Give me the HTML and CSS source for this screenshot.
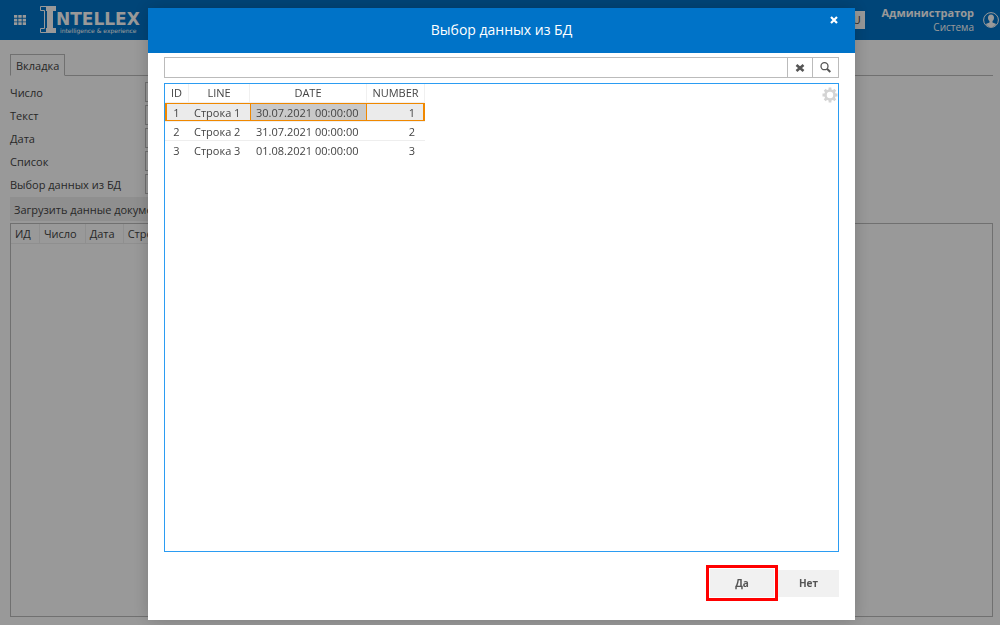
FILE: index.html
```html
<!DOCTYPE html>
<html lang="ru">
<head>
<meta charset="utf-8">
<meta name="viewport" content="width=device-width, initial-scale=1">
<title>Выбор данных из БД</title>
<link rel="stylesheet" href="styles.css">
</head>
<body>
<div class="app">
  <header class="topbar">
    <button class="icon-button" type="button" aria-label="Меню">
      <svg width="12" height="10" viewBox="0 0 12 10" fill="#fff"><path d="M0 0h3.3v2.7H0zM4.3 0h3.4v2.7H4.3zM8.7 0H12v2.7H8.7zM0 3.7h3.3v2.7H0zM4.3 3.7h3.4v2.7H4.3zM8.7 3.7H12v2.7H8.7zM0 7.3h3.3V10H0zM4.3 7.3h3.4V10H4.3zM8.7 7.3H12V10H8.7z"/></svg>
    </button>
    <div class="logo">
      <svg width="16" height="27" viewBox="0 0 16 27" aria-hidden="true"><path d="M7 .5H.5V4.500H4.500V22.500H.5v4H7" fill="none" stroke="#fff"/><path d="M6 0h10v5h-3v17h3v5H6v-5h1V5H6z" fill="#fff"/></svg>
      <div class="logo-text">
        <span class="logo-name">NTELLEX</span>
        <span class="logo-slogan">intelligence &amp; experience</span>
      </div>
    </div>
    <button class="lang" type="button">RU</button>
    <div class="user">
      <span class="user-name">Администратор</span>
      <span class="user-role">Система</span>
    </div>
    <svg class="avatar" width="16" height="16" viewBox="0 0 16 16" aria-hidden="true"><circle cx="8" cy="8" r="7.400" fill="none" stroke="#fff"/><path d="M8 2.500c-2 0-3 1.300-3 3.200 0 1.500.6 2.700 1.500 3.400v1.300l-3.700 1.500C4 13.800 5.900 15 8 15s4-1.200 5.200-3.100L9.500 10.400V9.100C10.400 8.400 11 7.200 11 5.700c0-1.900-1-3.200-3-3.200z" fill="#fff"/></svg>
  </header>
  <main class="page">
    <div class="tabs"><button class="tab" type="button">Вкладка</button></div>
    <form class="fields">
      <label for="f-number">Число</label><input id="f-number" type="text">
      <label for="f-text">Текст</label><input id="f-text" type="text">
      <label for="f-date">Дата</label><input id="f-date" type="text">
      <label for="f-list">Список</label><input id="f-list" type="text">
      <label for="f-db">Выбор данных из БД</label><input id="f-db" type="text">
    </form>
    <button class="load" type="button">Загрузить данные документа</button>
    <div class="sheet">
      <table class="columns">
        <thead><tr><th>ИД</th><th>Число</th><th>Дата</th><th>Строка</th></tr></thead>
      </table>
    </div>
  </main>
</div>
<div class="overlay">
  <section class="dialog" role="dialog" aria-modal="true" aria-labelledby="dialog-title">
    <header class="dialog-head">
      <h1 id="dialog-title">Выбор данных из БД</h1>
      <button class="close" type="button" aria-label="Закрыть">
        <svg width="8" height="8" viewBox="0 0 8 8"><path d="M1 1l6 6M7 1L1 7" stroke="#fff" stroke-width="2.200"/></svg>
      </button>
    </header>
    <div class="dialog-body">
      <div class="search">
        <input type="text" aria-label="Поиск">
        <button type="button" aria-label="Очистить"><svg width="10" height="8" viewBox="0 0 10 8"><path d="M1.500 1l7 6M8.500 1l-7 6" stroke="#555" stroke-width="2.600"/></svg></button>
        <button type="button" aria-label="Найти"><svg width="11" height="11" viewBox="0 0 11 11" fill="none" stroke="#555"><circle cx="4.500" cy="4.200" r="3.500" stroke-width="1.300"/><path d="M7 6.800l3.300 3.200" stroke-width="2"/></svg></button>
      </div>
      <div class="results">
        <table class="grid">
          <colgroup><col class="c-id"><col class="c-line"><col class="c-date"><col class="c-number"></colgroup>
          <thead><tr><th>ID</th><th>LINE</th><th>DATE</th><th>NUMBER</th></tr></thead>
          <tbody>
            <tr class="selected"><td>1</td><td>Строка 1</td><td class="current">30.07.2021 00:00:00</td><td>1</td></tr>
            <tr><td>2</td><td>Строка 2</td><td>31.07.2021 00:00:00</td><td>2</td></tr>
            <tr><td>3</td><td>Строка 3</td><td>01.08.2021 00:00:00</td><td>3</td></tr>
          </tbody>
        </table>
        <button class="settings" type="button" aria-label="Настройки">
          <svg width="16" height="16" viewBox="0 0 16 16" fill="none" stroke="#d4d4d4"><circle cx="8" cy="8" r="4.500" stroke-width="2.600"/><path d="M8 .5v3M8 12.500v3M.5 8h3M12.500 8h3M2.700 2.700l2 2M11.300 11.300l2 2M13.300 2.700l-2 2M4.700 11.300l-2 2" stroke-width="2.800"/></svg>
        </button>
      </div>
      <footer class="actions">
        <div class="highlight"><button type="button">Да</button></div>
        <button type="button">Нет</button>
      </footer>
    </div>
  </section>
</div>
</body>
</html>
```

FILE: styles.css
```css
* { box-sizing: border-box; }
body { margin: 0; background: #fff; color: #444; font: 11px/16px "Open Sans", sans-serif; overflow: hidden; }
button, input { font: inherit; color: inherit; margin: 0; padding: 0; border: 0; border-radius: 0; background: none; }
svg { display: block; }
table { border-collapse: collapse; }
th { font-weight: 400; }

.app { display: flex; flex-direction: column; height: 100vh; }
.topbar { display: flex; align-items: center; height: 40px; padding: 0 1px 0 14px; background: #0073c8; color: #fff; flex: none; }
.logo { display: flex; margin-left: 14px; }
.logo-text { display: flex; flex-direction: column; padding-top: 5px; }
.logo-name { font: bold 17px/17px "DejaVu Sans", sans-serif; }
.logo-slogan { font: 6px/6px "DejaVu Sans", sans-serif; padding-left: 4px; }
.lang { width: 24px; height: 18px; margin-left: auto; background: #fff; color: #444; }
.user { display: flex; flex-direction: column; margin-left: 16px; text-align: right; line-height: 14px; }
.user-name { font-weight: 700; }
.user-role { font-size: 10px; }
.avatar { margin-left: 9px; }

.page { display: flex; flex-direction: column; flex: 1; padding: 14px 7px 8px 10px; }
.tabs { display: flex; height: 22px; border-bottom: 1px solid #bbb; }
.tab { height: 22px; padding: 2px 5px 0; border: 1px solid #bbb; border-bottom-color: #fff; background: #fff; }
.fields { display: grid; grid-template-columns: 133px minmax(0, 360px); grid-auto-rows: 20px; row-gap: 3px; column-gap: 2px; padding: 6px 0 3px; align-items: center; }
.fields label { padding-top: 2px; }
.fields input { height: 20px; border: 1px solid #bbb; }
.load { align-self: flex-start; height: 24px; padding: 2px 4px 0; background: #efefef; text-align: left; }
.sheet { flex: 1; margin-top: 2px; border: 1px solid #bbb; }
.columns th { height: 19px; padding: 1px 8px 0 4px; border: 1px solid #eee; border-width: 0 1px 1px 0; }

.overlay { position: fixed; inset: 0; display: flex; padding: 8px 145px 5px 148px; background: rgba(0, 0, 0, .4); }
.dialog { display: flex; flex-direction: column; flex: 1; background: #fff; box-shadow: 0 0 16px rgba(0, 0, 0, .2); }
.dialog-head { position: relative; display: flex; align-items: center; justify-content: center; height: 45px; padding-bottom: 2px; background: #0073c8; color: #fff; }
.dialog-head h1 { margin: 0; font-size: 14px; line-height: 20px; font-weight: 400; }
.close { position: absolute; top: 8px; right: 17px; }
.dialog-body { display: flex; flex-direction: column; flex: 1; padding: 4px 16px 19px; }
.search { display: flex; height: 21px; border: 1px solid #bbb; }
.search input { flex: 1; min-width: 0; padding: 0 4px; }
.search button { display: flex; align-items: center; justify-content: center; width: 25px; border-left: 1px solid #bbb; }
.search button + button { width: 26px; }
.results { position: relative; flex: 1; margin-top: 5px; border: 1px solid #2b9cf2; }
.settings { position: absolute; top: 3px; right: 0; }
.grid { table-layout: fixed; width: 260px; border-collapse: separate; border-spacing: 0; }
.c-id { width: 24px; }
.c-line { width: 61px; }
.c-date { width: 117px; }
.c-number { width: 58px; }
.grid th { height: 19px; padding: 0; border: 1px solid #f0f0f0; border-width: 0 1px 1px 0; }
.grid td { height: 19px; padding: 0 5px; border-bottom: 1px solid #eee; white-space: nowrap; line-height: 17px; }
.grid td:nth-child(3) { padding-left: 6px; }
.grid td:first-child { padding: 0 1px 0 0; text-align: center; }
.grid td:last-child { padding-right: 10px; text-align: right; }
.grid tr:last-child td { border-bottom: 0; }
.grid .selected td { background: #ebebeb; box-shadow: inset 0 1px #f08800, inset 0 -1px #f08800; }
.grid .selected td:first-child { box-shadow: inset 0 1px #f08800, inset 0 -1px #f08800, inset 2px 0 #f08800; }
.grid .selected td:last-child { box-shadow: inset 0 1px #f08800, inset 0 -1px #f08800, inset -2px 0 #f08800; }
.grid .selected td.current { background: #c9c9c9; box-shadow: inset 0 0 0 1px #f08800; }
.actions { display: flex; align-items: center; justify-content: flex-end; margin-top: 13px; }
.actions button { width: 62px; height: 27px; background: #f1f1f1; font-size: 10px; font-weight: 700; color: #555; }
.highlight { display: flex; padding: 1px; border: 3px solid #f00; }
.actions .highlight button { height: 28px; width: 64px; }
.actions > button { width: 61px; }
```
